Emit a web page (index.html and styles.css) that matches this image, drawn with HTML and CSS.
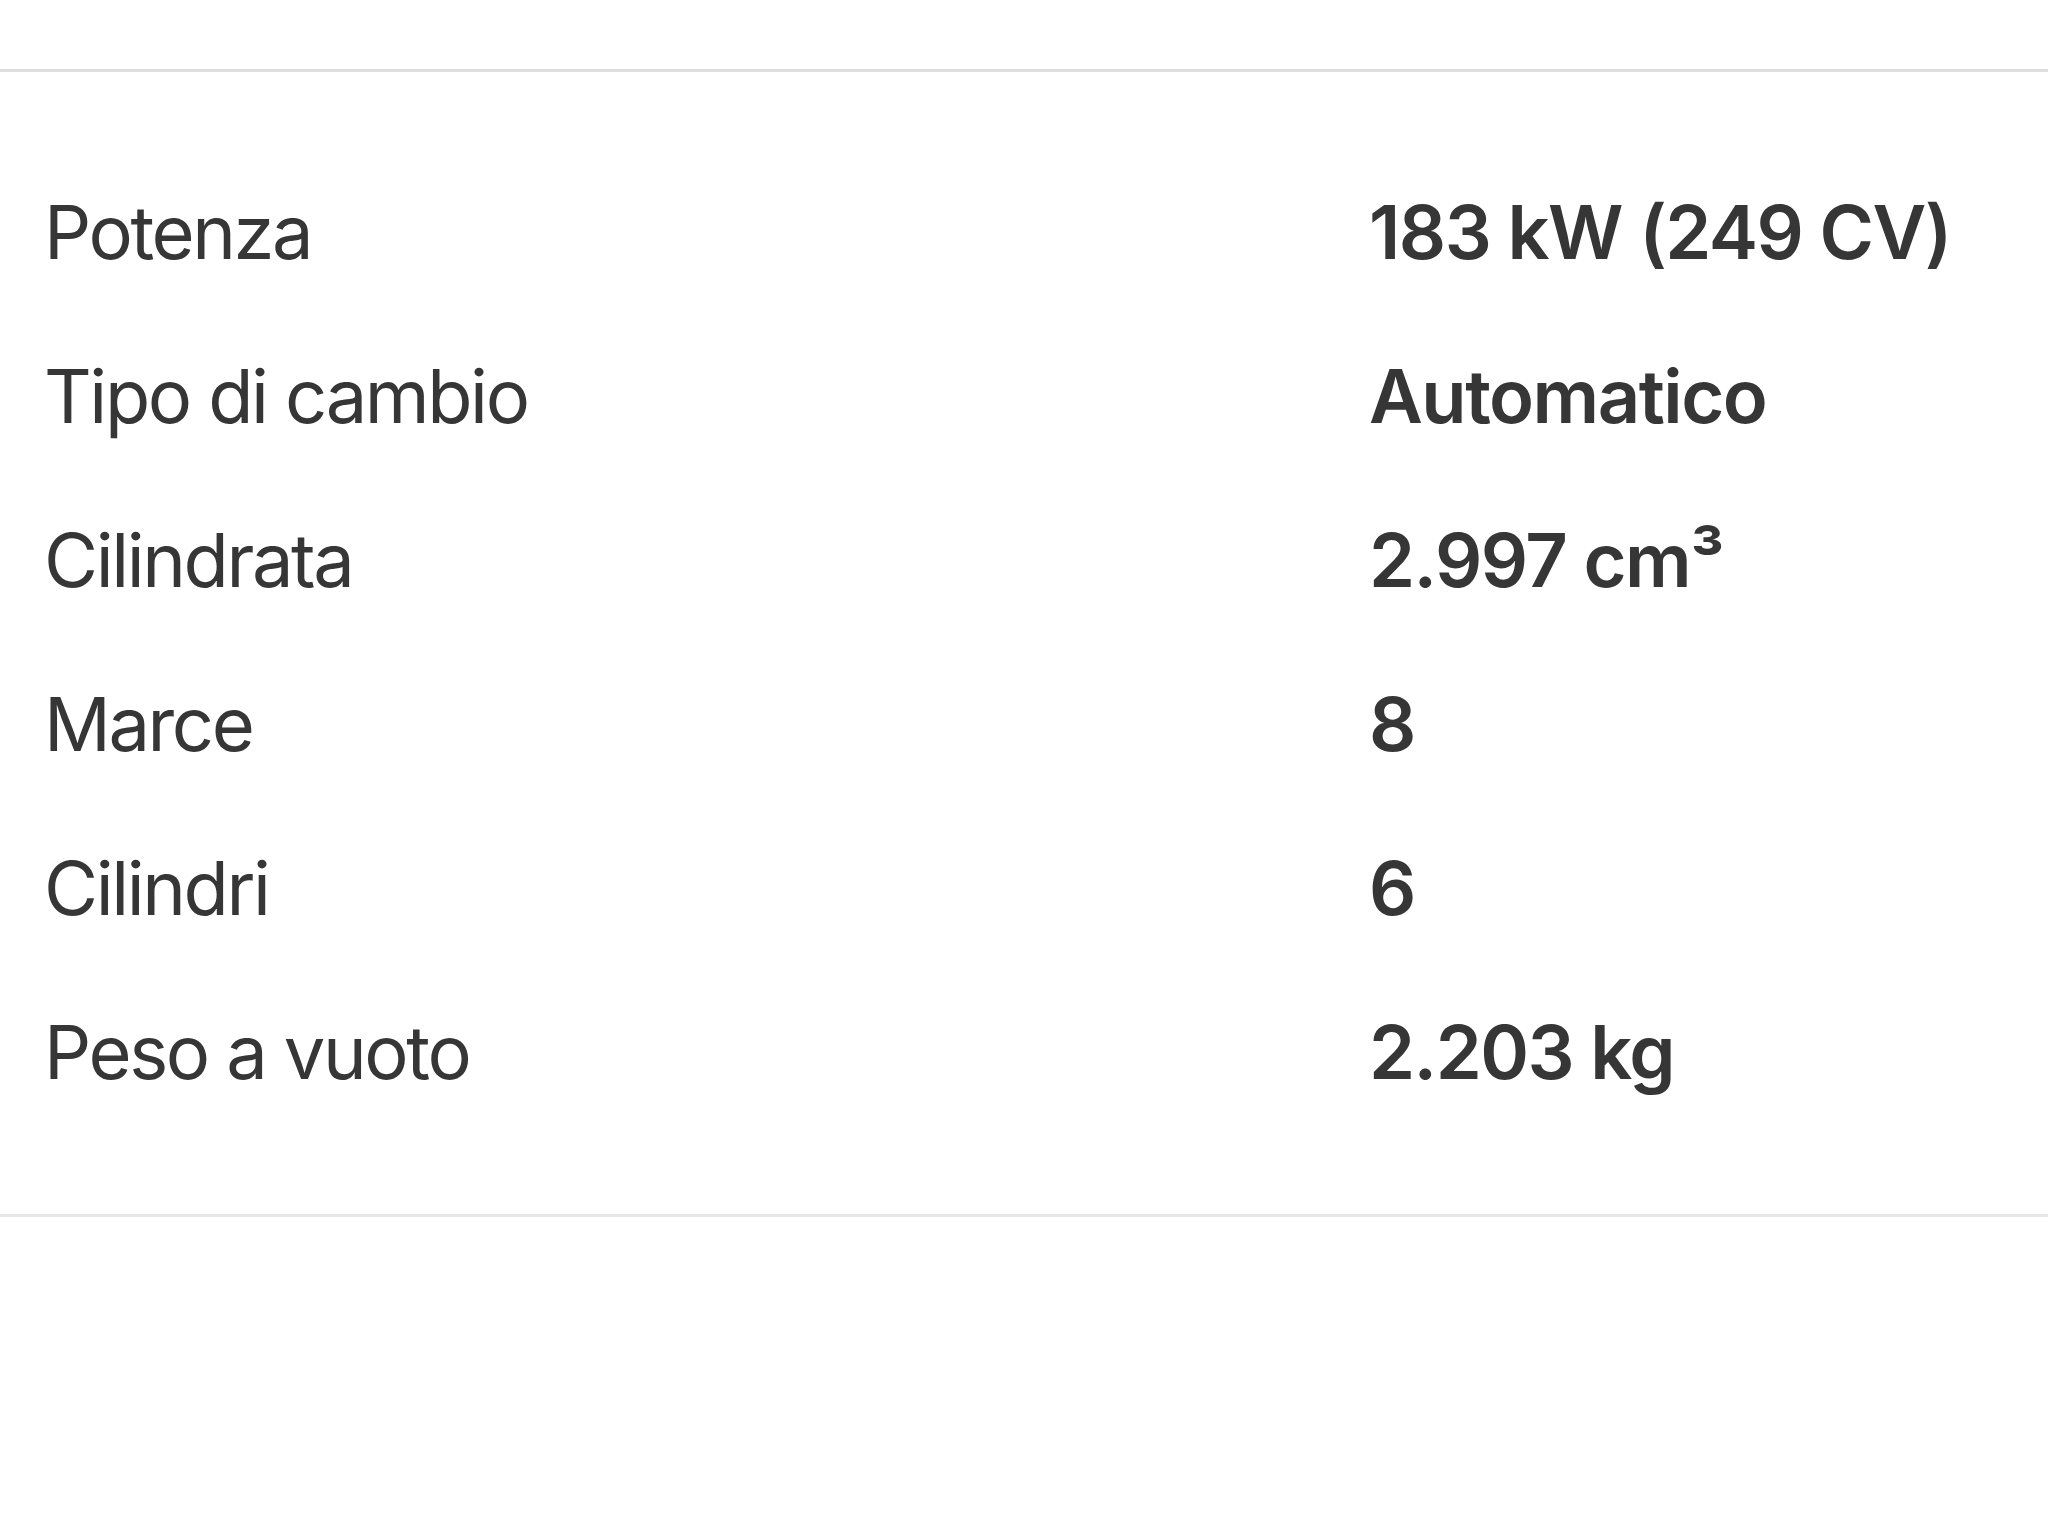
FILE: index.html
```html
<!DOCTYPE html>
<html lang="it">
<head>
<meta charset="utf-8">
<title>Dati tecnici</title>
<link rel="stylesheet" href="styles.css">
</head>
<body>
<section class="specs">
  <dl class="spec-list">
    <div class="spec-row"><dt class="spec-label">Potenza</dt><dd class="spec-value">183 kW (249 CV)</dd></div>
    <div class="spec-row"><dt class="spec-label">Tipo di cambio</dt><dd class="spec-value">Automatico</dd></div>
    <div class="spec-row"><dt class="spec-label">Cilindrata</dt><dd class="spec-value">2.997 cm³</dd></div>
    <div class="spec-row"><dt class="spec-label">Marce</dt><dd class="spec-value">8</dd></div>
    <div class="spec-row"><dt class="spec-label">Cilindri</dt><dd class="spec-value">6</dd></div>
    <div class="spec-row"><dt class="spec-label">Peso a vuoto</dt><dd class="spec-value">2.203 kg</dd></div>
  </dl>
</section>
</body>
</html>
```
FILE: styles.css
```css
html, body {
  margin: 0;
  padding: 0;
  background: #ffffff;
}

body {
  font-family: Inter, "Noto Sans", "Liberation Sans", sans-serif;
  color: #363636;
  padding-top: 69px;
}

.specs {
  border-top: 3px solid #dedede;
  border-bottom: 3px solid #e8e8e8;
  padding: 78px 0 80px 44px;
}

.spec-list {
  margin: 0;
  display: flex;
  flex-direction: column;
}

.spec-row {
  display: grid;
  grid-template-columns: 1325px 1fr;
  height: 164px;
  align-items: center;
}

.spec-label,
.spec-value {
  margin: 0;
  font-size: 74px;
  line-height: 164px;
}

.spec-label {
  font-weight: 400;
  letter-spacing: -2.4px;
}

.spec-value {
  font-weight: 600;
  letter-spacing: -1.5px;
}
```
